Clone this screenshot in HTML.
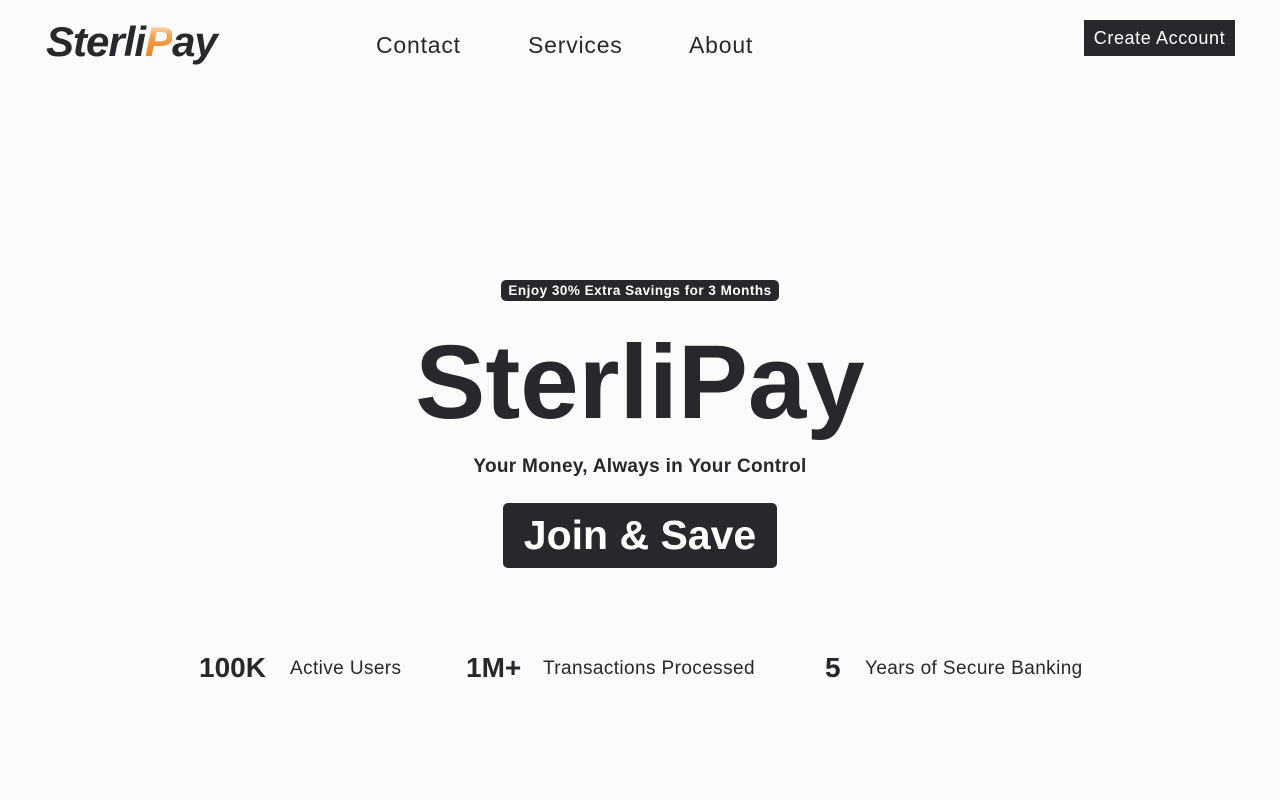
<!DOCTYPE html>
<html><head><meta charset="utf-8"><style>
body{margin:0;width:1280px;height:800px;background:#fbfbfb;font-family:"Liberation Sans",sans-serif;color:#27282c;position:relative;overflow:hidden}
.a{position:absolute;white-space:nowrap}
.logo{left:46px;top:18px;font-size:42px;font-weight:bold;font-style:italic;letter-spacing:-1px}
.logo span{background:linear-gradient(#fff 0%,#f5a04a 40%,#ec7a10 100%);-webkit-background-clip:text;color:transparent}
.nav{top:32px;font-size:23px;letter-spacing:0.8px}
.btn{left:1084px;top:20px;width:151px;height:36px;background:#27282c;color:#fff;font-size:18px;line-height:36px;text-align:center;letter-spacing:0.6px}
.badge{left:501px;top:280px;width:278px;height:21px;background:#27282c;color:#fff;border-radius:5px;font-size:13.5px;font-weight:bold;line-height:21px;text-align:center;letter-spacing:0.5px}
.h1{left:0;width:1280px;text-align:center;top:323px;font-size:105px;font-weight:bold;line-height:120px}
.sub{left:0;width:1280px;text-align:center;top:456px;font-size:19px;font-weight:bold;letter-spacing:0.3px}
.join{left:503px;top:503px;width:274px;height:65px;background:#27282c;border-radius:5px;color:#fff;font-size:41px;font-weight:bold;line-height:65px;text-align:center}
.num{top:652px;font-size:28px;font-weight:bold;letter-spacing:0}
.lbl{top:658px;font-size:19px;letter-spacing:0.4px}
</style></head><body>
<div class="a logo">Sterli<span>P</span>ay</div>
<div class="a nav" style="left:376px">Contact</div>
<div class="a nav" style="left:528px">Services</div>
<div class="a nav" style="left:689px">About</div>
<div class="a btn">Create Account</div>
<div class="a badge">Enjoy 30% Extra Savings for 3 Months</div>
<div class="a h1">SterliPay</div>
<div class="a sub">Your Money, Always in Your Control</div>
<div class="a join">Join &amp; Save</div>
<div class="a num" style="left:199px">100K</div>
<div class="a lbl" style="left:290px">Active Users</div>
<div class="a num" style="left:466px">1M+</div>
<div class="a lbl" style="left:543px">Transactions Processed</div>
<div class="a num" style="left:825px">5</div>
<div class="a lbl" style="left:865px">Years of Secure Banking</div>
</body></html>
